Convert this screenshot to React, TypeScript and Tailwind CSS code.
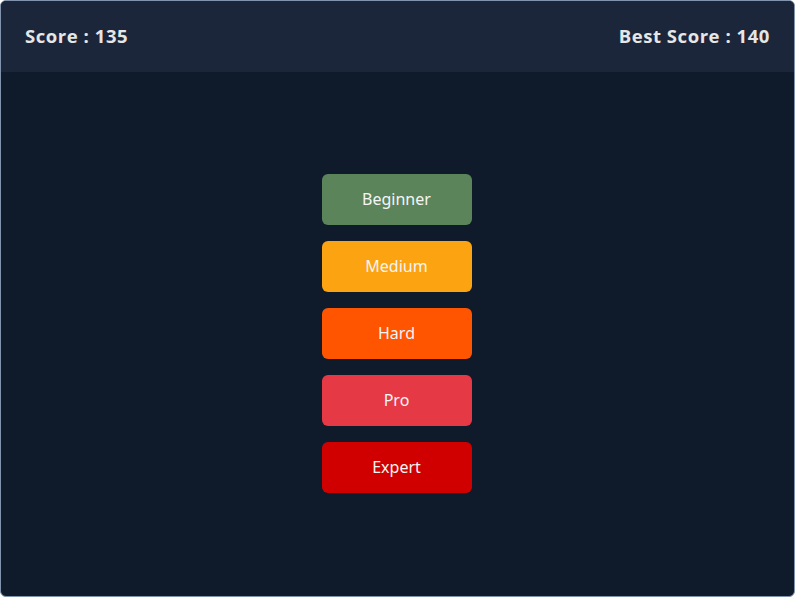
import React from "react";

const levels = [
  { label: "Beginner", color: "bg-[#5b845b]" },
  { label: "Medium", color: "bg-[#fca311]" },
  { label: "Hard", color: "bg-[#ff5400]" },
  { label: "Pro", color: "bg-[#e63946]" },
  { label: "Expert", color: "bg-[#d00000]" },
];

export default function App() {
  return (
    <div className="h-[597px] w-[795px] bg-white">
      <div className="flex h-full flex-col overflow-hidden rounded-md border border-[#8193ad] bg-[#0f1b2b]">
        <header
          className="flex h-[71px] items-center justify-between bg-[#1c263b] px-6 pb-[2px] text-[18.5px] font-bold tracking-[0.55px] text-[#e6e6e6]"
          style={{ fontFamily: '"Open Sans", sans-serif' }}
        >
          <span>Score : 135</span>
          <span>Best Score : 140</span>
        </header>
        <main className="flex flex-1 flex-col items-center justify-center gap-4 pb-[2px] pr-[2px]">
          {levels.map((level) => (
            <button
              key={level.label}
              className={`h-[51px] w-[150px] rounded-md text-[16px] text-[#f5f5f5] ${level.color}`}
              style={{ fontFamily: '"Noto Sans", sans-serif' }}
            >
              {level.label}
            </button>
          ))}
        </main>
      </div>
    </div>
  );
}
